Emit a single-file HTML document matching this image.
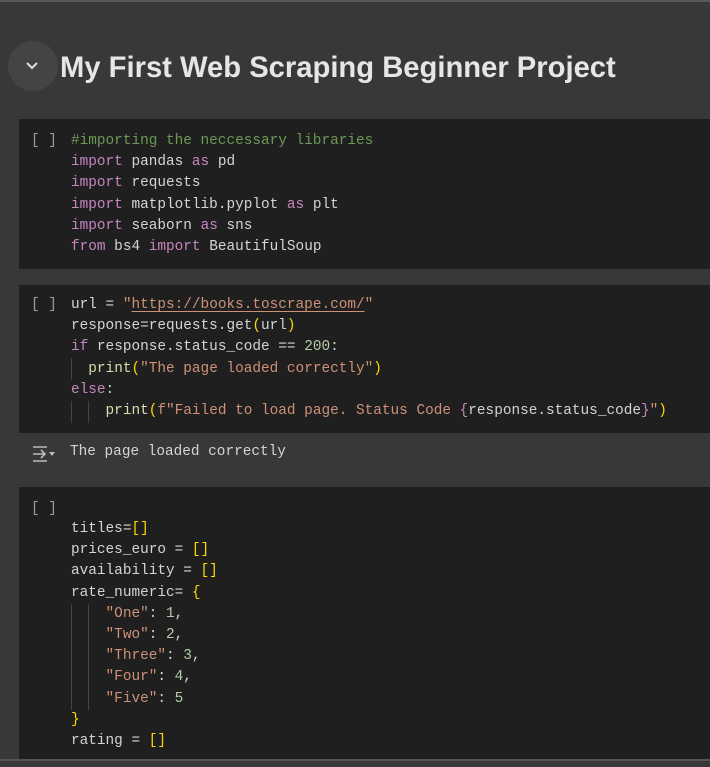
<!DOCTYPE html>
<html><head><meta charset="utf-8"><style>
html,body{margin:0;padding:0;background:#383838;width:710px;height:767px;overflow:hidden;position:relative}
.top{position:absolute;left:0;top:0;width:710px;height:2px;background:#5a5a5a}
.circ{position:absolute;left:8px;top:41px;width:50px;height:50px;border-radius:50%;background:#444}
h1{position:absolute;left:60px;top:52px;margin:0;font:bold 29.2px "Liberation Sans",sans-serif;color:#e6e6e6;white-space:nowrap}
.cell{position:absolute;left:19px;width:691px;background:#1f1f1f}
pre{position:absolute;left:52px;margin:0;font:14.4px/21.2px "Liberation Mono",monospace;color:#d4d4d4}
.br{position:absolute;left:12px;font:14.4px/21.2px "Liberation Mono",monospace;color:#9a9a9a}
.k{color:#c586c0}.c{color:#6a9955}.s{color:#ce9178}.n{color:#b5cea8}.y{color:#ffd700}.f{color:#dcdcaa}
.u{text-decoration:underline;text-underline-offset:3px}
.g{position:absolute;width:1px;background:#444}
.bot{position:absolute;left:0;top:759px;width:710px;height:2px;background:#555}
</style></head><body>
<div class="top"></div>
<div class="circ"></div>
<svg style="position:absolute;left:25px;top:61px" width="14" height="10"><path d="M2 2 L7 7 L12 2" stroke="#ddd" stroke-width="2" fill="none"/></svg>
<h1>My First Web Scraping Beginner Project</h1>

<div class="cell" style="top:119px;height:150px"><span class="br" style="top:12px">[ ]</span>
<pre style="top:12px"><span class="c">#importing the neccessary libraries</span>
<span class="k">import</span> pandas <span class="k">as</span> pd
<span class="k">import</span> requests
<span class="k">import</span> matplotlib.pyplot <span class="k">as</span> plt
<span class="k">import</span> seaborn <span class="k">as</span> sns
<span class="k">from</span> bs4 <span class="k">import</span> BeautifulSoup</pre></div>

<div class="cell" style="top:285px;height:148px"><span class="br" style="top:10px">[ ]</span>
<pre style="top:10px">url = <span class="s">"<span class="u">https://books.toscrape.com/</span>"</span>
response=requests.get<span class="y">(</span>url<span class="y">)</span>
<span class="k">if</span> response.status_code == <span class="n">200</span>:
  <span class="f">print</span><span class="y">(</span><span class="s">"The page loaded correctly"</span><span class="y">)</span>
<span class="k">else</span>:
    <span class="f">print</span><span class="y">(</span><span class="s">f"Failed to load page. Status Code </span><span class="k">{</span>response.status_code<span class="k">}</span><span class="s">"</span><span class="y">)</span></pre>
<div class="g" style="left:52px;top:73px;height:22px"></div>
<div class="g" style="left:52px;top:116px;height:22px"></div>
<div class="g" style="left:69px;top:116px;height:22px"></div>
</div>
<svg style="position:absolute;left:31px;top:444px" width="26" height="20"><path d="M2 3h14M2 17h14M2 10h12M10 6l4 4-4 4" stroke="#bbb" stroke-width="1.6" fill="none"/><path d="M18 8h6l-3 4z" fill="#bbb"/></svg>
<pre style="top:442px;left:70px">The page loaded correctly</pre>

<div class="cell" style="top:487px;height:272px"><span class="br" style="top:12px">[ ]</span>
<pre style="top:32px">titles=<span class="y">[]</span>
prices_euro = <span class="y">[]</span>
availability = <span class="y">[]</span>
rate_numeric= <span class="y">{</span>
    <span class="s">"One"</span>: <span class="n">1</span>,
    <span class="s">"Two"</span>: <span class="n">2</span>,
    <span class="s">"Three"</span>: <span class="n">3</span>,
    <span class="s">"Four"</span>: <span class="n">4</span>,
    <span class="s">"Five"</span>: <span class="n">5</span>
<span class="y">}</span>
rating = <span class="y">[]</span></pre>
<div class="g" style="left:52px;top:117px;height:106px"></div>
<div class="g" style="left:69px;top:117px;height:106px"></div>
</div>
<div class="bot"></div>
</body></html>
